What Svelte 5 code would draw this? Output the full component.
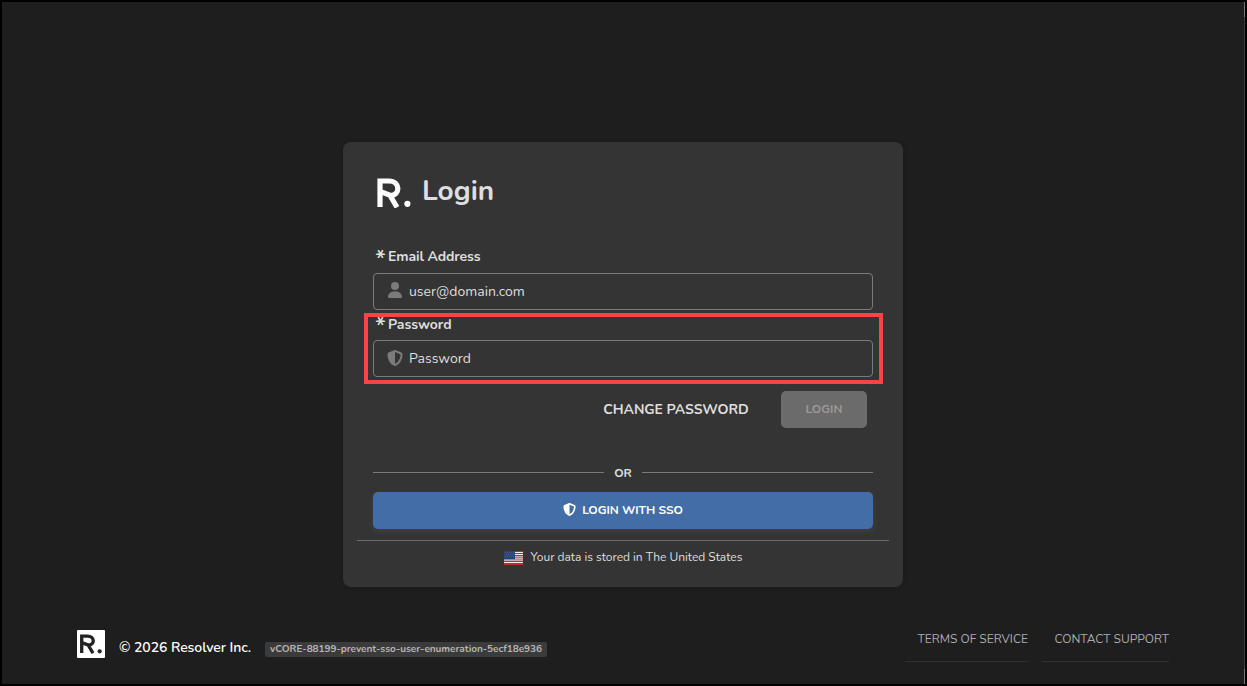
<script lang="ts">
    let email = '';
    let password = '';

    const version = 'vCORE-88199-prevent-sso-user-enumeration-5ecf18e936';
    const stripes = [0, 2, 4, 6, 8, 10, 12];
    const links = [
        { label: 'Terms of Service', name: 'terms' },
        { label: 'Contact Support', name: 'support' },
    ];
</script>

<div class="page">
    <main class="card">
        <header class="title">
            <svg class="logo" width="34" height="30" viewBox="0 0 34 30">
                <path
                    d="M3 29V3H12C23.5 3 23.5 17.5 13.5 17.5L3 13.3M12.5 16.5L20 29.3"
                    fill="none"
                    stroke="#fff"
                    stroke-width="5.2"
                />
                <circle cx="30.4" cy="25.8" r="3.1" fill="#fff" />
            </svg>
            <h1>Login</h1>
        </header>

        <form on:submit|preventDefault>
            <label for="email"><span class="required">*</span><span class="label-email">Email Address</span></label>
            <div class="field">
                <svg class="user" width="14" height="16" viewBox="0 0 448 512">
                    <path d="M224 256a128 128 0 1 0 0-256 128 128 0 1 0 0 256zm-46 48C80 304 0 384 0 482c0 17 13 30 30 30h388c17 0 30-13 30-30 0-98-80-178-178-178z" />
                </svg>
                <input id="email" class="email" type="text" bind:value={email} placeholder="user@domain.com" />
            </div>

            <div class="password-group">
                <label for="password"><span class="required">*</span><span class="label-password">Password</span></label>
                <div class="field">
                    <svg width="16" height="16" viewBox="0 0 512 512">
                        <path d="M256 0c5 0 9 1 13 3l189 80c22 9 38 31 38 57-1 99-41 280-213 363-17 8-37 8-54 0C57 420 17 239 16 140c0-26 16-48 38-57L243 3c4-2 8-3 13-3zm0 67v378c138-67 175-215 176-303L256 67z" />
                    </svg>
                    <input id="password" class="pass" type="password" bind:value={password} placeholder="Password" />
                </div>
                <div class="highlight"></div>
            </div>

            <div class="actions">
                <button type="button" class="change">Change Password</button>
                <button type="submit" class="login" disabled>Login</button>
            </div>
        </form>

        <div class="separator"><span>OR</span></div>

        <button class="sso">
            <svg width="13" height="13" viewBox="0 0 512 512">
                <path d="M256 0c5 0 9 1 13 3l189 80c22 9 38 31 38 57-1 99-41 280-213 363-17 8-37 8-54 0C57 420 17 239 16 140c0-26 16-48 38-57L243 3c4-2 8-3 13-3zm0 67v378c138-67 175-215 176-303L256 67z" />
            </svg>
            <span>Login with SSO</span>
        </button>

        <div class="region">
            <svg width="19" height="14" viewBox="0 0 19 14">
                <rect width="19" height="14" fill="#fff" />
                {#each stripes as y}
                    <rect {y} width="19" height="1.1" fill="#bf2a35" />
                {/each}
                <rect x="11" y="5" width="8" height="4" fill="#c08f94" opacity="0.75" />
                <rect y="8" width="19" height="2" fill="#c08f94" opacity="0.75" />
                <rect y="13" width="19" height="1" fill="#bf2a35" />
                <rect width="11" height="8" fill="#2c4271" />
                <path d="M1 1.5h9M2 3.5h9M1 5.5h9" stroke="#475f91" stroke-width="1" stroke-dasharray="1 1" />
            </svg>
            <span>Your data is stored in The United States</span>
        </div>
    </main>

    <footer>
        <svg class="badge" width="28" height="28" viewBox="0 0 28 28">
            <rect width="28" height="28" rx="1" fill="#fff" />
            <path
                d="M4.7 23V6.2H10.5C18 6.2 18 15 11.5 15L4.7 12.6M10.8 14.5L16 23.2"
                fill="none"
                stroke="#222"
                stroke-width="3.3"
            />
            <circle cx="22.7" cy="21.3" r="2.1" fill="#222" />
        </svg>
        <span class="copyright">© 2026 Resolver Inc.</span>
        <span class="version">{version}</span>
        <nav>
            {#each links as link}
                <a href="#{link.name}" class={link.name}>{link.label}</a>
            {/each}
        </nav>
    </footer>
    <div class="scrollbar"></div>
</div>

<style>
    :global(body) {
        background: #000;
        overflow: hidden;
    }

    .page {
        position: relative;
        box-sizing: border-box;
        width: 1247px;
        height: 686px;
        padding-top: 140px;
        border: 2px solid #000;
        border-radius: 2px;
        background: #1e1e1e;
        color: #dedede;
        font-family: Nunito, Lato, sans-serif;
        overflow: hidden;
    }

    .card {
        box-sizing: border-box;
        width: 560px;
        height: 445px;
        margin-left: 341px;
        padding: 30px 30px 0;
        border-radius: 8px;
        background: #343434;
        box-shadow: 0 0 4px rgba(0, 0, 0, 0.2);
    }

    .title {
        display: flex;
        height: 75px;
    }

    .logo {
        margin: 6px 0 0 4px;
    }

    h1 {
        margin: 1px 0 0 11px;
        font-size: 28px;
        line-height: 36px;
        font-weight: 700;
    }

    label {
        display: flex;
        height: 26px;
        padding-left: 2px;
        font-size: 14px;
        line-height: 20px;
        font-weight: 700;
    }

    .required {
        width: 13px;
        font-size: 24px;
        line-height: 24px;
        font-weight: 600;
    }

    .label-email {
        letter-spacing: -0.12px;
    }

    .label-password {
        padding-top: 1px;
    }

    .field {
        display: flex;
        align-items: center;
        box-sizing: border-box;
        height: 37px;
        padding-left: 13px;
        border: 1px solid #7b7b7b;
        border-radius: 4px;
    }

    .field svg {
        width: 16px;
        margin-top: -1px;
        fill: #7b7b7b;
    }

    .field .user {
        margin-top: -3px;
    }

    input {
        flex: 1;
        margin-left: 6px;
        padding: 0;
        border: 0;
        outline: 0;
        background: transparent;
        color: #dedede;
        font: 14px Nunito, Lato, sans-serif;
    }

    input::placeholder {
        color: #dedede;
        opacity: 1;
    }

    .password-group {
        position: relative;
        padding-top: 4px;
    }

    .highlight {
        position: absolute;
        inset: 3px -10px -7px -9px;
        border: 4px solid #ff4242;
    }

    .actions {
        display: flex;
        justify-content: flex-end;
        margin-top: 14px;
        padding-right: 6px;
    }

    button {
        height: 37px;
        padding: 0 0 1px;
        border: 0;
        font-family: Nunito, Lato, sans-serif;
        font-weight: 700;
        text-transform: uppercase;
    }

    .change {
        width: 146px;
        margin-right: 32px;
        padding: 0;
        background: transparent;
        color: #dedede;
        font-size: 14px;
        letter-spacing: -0.05px;
        white-space: nowrap;
    }

    .login {
        width: 86px;
        border-radius: 5px;
        background: #6b6b6b;
        color: #999;
        font-size: 12px;
    }

    .separator {
        display: flex;
        align-items: center;
        height: 19px;
        margin-top: 35px;
        font-size: 12px;
        font-weight: 700;
    }

    .separator::before,
    .separator::after {
        content: '';
        flex: 1;
        height: 1px;
        background: #7b7b7b;
    }

    .separator span {
        width: 38px;
        padding-top: 1px;
        text-align: center;
    }

    .sso {
        display: flex;
        align-items: center;
        justify-content: center;
        width: 500px;
        margin-top: 10px;
        padding-bottom: 2px;
        border-radius: 5px;
        background: #426da7;
        box-shadow: 0 2px 6px rgba(100, 100, 100, 0.3);
        color: #fff;
        font-size: 12px;
        letter-spacing: -0.05px;
    }

    .sso svg {
        margin-right: 6px;
        fill: #fff;
    }

    .region {
        display: flex;
        align-items: center;
        justify-content: center;
        height: 33px;
        margin: 11px -16px 0;
        border-top: 1px solid #6b6b6b;
        font-size: 12px;
        letter-spacing: -0.02px;
    }

    .region svg {
        margin-right: 8px;
    }

    .region span {
        padding-bottom: 2px;
    }

    footer {
        display: flex;
        margin-top: 43px;
        padding: 0 76px 0 75px;
    }

    .copyright {
        margin: 9px 0 0 14px;
        width: 132px;
        color: #fff;
        font-size: 14px;
        line-height: 18px;
        font-weight: 600;
        letter-spacing: -0.07px;
        white-space: nowrap;
    }

    .version {
        box-sizing: border-box;
        width: 282px;
        height: 15px;
        margin: 12px 0 0 14px;
        border-radius: 2px;
        background: #3b3b3b;
        color: #b5b5b5;
        font-size: 10px;
        line-height: 14px;
        font-weight: 700;
        letter-spacing: -0.03px;
        text-align: center;
        white-space: nowrap;
    }

    nav {
        display: flex;
        gap: 14px;
        margin-left: auto;
    }

    a {
        box-sizing: border-box;
        height: 32px;
        border-bottom: 1px solid #303030;
        color: #aaa;
        font-size: 12px;
        line-height: 18px;
        text-align: right;
        text-decoration: none;
        text-transform: uppercase;
        white-space: nowrap;
    }

    .terms {
        width: 123px;
    }

    .support {
        width: 127px;
    }

    .scrollbar {
        position: absolute;
        top: 0;
        right: 0;
        width: 1px;
        height: 682px;
        background: linear-gradient(#777 15px, #3c3e3c 15px 667px, #777 667px);
    }
</style>
